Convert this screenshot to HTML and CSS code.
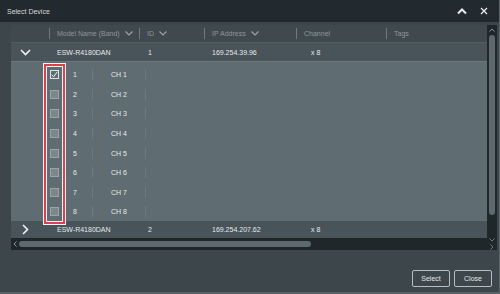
FILE: index.html
```html
<!DOCTYPE html>
<html lang="en">
  <head>
    <meta charset="UTF-8" />
    <title>Select Device</title>
    <link rel="stylesheet" href="styles.css">
  </head>
  <body>
    <div class="window">
      <div class="titlebar">
        <span class="title">Select Device</span>
        <div class="win-icons">
          <svg width="10" height="8" viewBox="0 0 10 8"><path d="M1 6.5 L5 2.5 L9 6.5" stroke="#e8ecee" stroke-width="2" fill="none"/></svg>
          <svg width="8" height="8" viewBox="0 0 8 8"><path d="M1 1 L7 7 M7 1 L1 7" stroke="#e8ecee" stroke-width="1.3" fill="none"/></svg>
        </div>
      </div>

      <div class="body">
        <div class="table">
          <div class="table-main">
            <div class="content">
              <div class="row header">
                <div class="cell c0"></div>
                <div class="cell c1"><span class="sep"></span>Model Name (Band)<svg class="chev" width="8" height="5" viewBox="0 0 8 5"><path d="M0.5 0.5 L4 4 L7.5 0.5" stroke="#9aa4a8" stroke-width="1.2" fill="none"/></svg></div>
                <div class="cell c2"><span class="sep"></span>ID<svg class="chev" width="8" height="5" viewBox="0 0 8 5"><path d="M0.5 0.5 L4 4 L7.5 0.5" stroke="#9aa4a8" stroke-width="1.2" fill="none"/></svg></div>
                <div class="cell c3"><span class="sep"></span>IP Address<svg class="chev" width="8" height="5" viewBox="0 0 8 5"><path d="M0.5 0.5 L4 4 L7.5 0.5" stroke="#9aa4a8" stroke-width="1.2" fill="none"/></svg></div>
                <div class="cell c4"><span class="sep"></span>Channel</div>
                <div class="cell c5"><span class="sep"></span>Tags</div>
              </div>

              <div class="row device">
                <div class="cell c0"><svg class="expander" width="11" height="7" viewBox="0 0 11 7"><path d="M1 1 L5.5 5.5 L10 1" stroke="#f2f4f5" stroke-width="1.6" fill="none"/></svg></div>
                <div class="cell c1">ESW-R4180DAN</div>
                <div class="cell c2">1</div>
                <div class="cell c3">169.254.39.96</div>
                <div class="cell c4 count">x 8</div>
                <div class="cell c5"></div>
              </div>

              <div class="children">
                <div class="highlight"></div>
                <div class="child-row"><span class="cb checked"><svg width="7" height="7" viewBox="0 0 7 7"><path d="M0.8 3.8 L2.6 5.8 L6.3 0.8" stroke="#f2f4f5" stroke-width="1" fill="none"/></svg></span><span class="num">1</span><span class="sep"></span><span class="ch">CH 1</span><span class="sep"></span></div>
                <div class="child-row"><span class="cb"></span><span class="num">2</span><span class="sep"></span><span class="ch">CH 2</span><span class="sep"></span></div>
                <div class="child-row"><span class="cb"></span><span class="num">3</span><span class="sep"></span><span class="ch">CH 3</span><span class="sep"></span></div>
                <div class="child-row"><span class="cb"></span><span class="num">4</span><span class="sep"></span><span class="ch">CH 4</span><span class="sep"></span></div>
                <div class="child-row"><span class="cb"></span><span class="num">5</span><span class="sep"></span><span class="ch">CH 5</span><span class="sep"></span></div>
                <div class="child-row"><span class="cb"></span><span class="num">6</span><span class="sep"></span><span class="ch">CH 6</span><span class="sep"></span></div>
                <div class="child-row"><span class="cb"></span><span class="num">7</span><span class="sep"></span><span class="ch">CH 7</span><span class="sep"></span></div>
                <div class="child-row"><span class="cb"></span><span class="num">8</span><span class="sep"></span><span class="ch">CH 8</span><span class="sep"></span></div>
              </div>

              <div class="row device second">
                <div class="cell c0"><svg class="expander right" width="7" height="11" viewBox="0 0 7 11"><path d="M1 1 L5.5 5.5 L1 10" stroke="#f2f4f5" stroke-width="1.6" fill="none"/></svg></div>
                <div class="cell c1">ESW-R4180DAN</div>
                <div class="cell c2">2</div>
                <div class="cell c3">169.254.207.62</div>
                <div class="cell c4 count">x 8</div>
                <div class="cell c5"></div>
              </div>
            </div>

            <div class="vscroll">
              <svg width="6" height="4" viewBox="0 0 6 4"><path d="M0.5 3.5 L3 1 L5.5 3.5" stroke="#8d979b" stroke-width="1" fill="none"/></svg>
              <div class="vthumb"></div>
            </div>
          </div>

          <div class="hscroll">
            <svg width="4" height="6" viewBox="0 0 4 6"><path d="M3.5 0.5 L1 3 L3.5 5.5" stroke="#8d979b" stroke-width="1" fill="none"/></svg>
            <div class="hthumb"></div>
            <div class="hspace"></div>
            <div class="corner">
              <svg width="6" height="4" viewBox="0 0 6 4"><path d="M0.5 0.5 L3 3 L5.5 0.5" stroke="#6d777b" stroke-width="1" fill="none"/></svg>
              <svg width="4" height="6" viewBox="0 0 4 6"><path d="M0.5 0.5 L3 3 L0.5 5.5" stroke="#6d777b" stroke-width="1" fill="none"/></svg>
            </div>
          </div>
        </div>

        <div class="footer">
          <button class="btn">Select</button>
          <button class="btn">Close</button>
        </div>
      </div>
    </div>
  </body>
</html>
```

FILE: styles.css
```css
html,
body {
  margin: 0;
  padding: 0;
  background: #3d464b;
}

body {
  font-family: "Liberation Sans", Arial, sans-serif;
  font-size: 7px;
  color: #e6e9ea;
}

.window {
  width: 500px;
  height: 294px;
  box-sizing: border-box;
  border-right: 1px solid #5d666a;
  border-bottom: 2px solid #596266;
  background: #3d464b;
  display: flex;
  flex-direction: column;
  overflow: hidden;
}

.titlebar {
  height: 22px;
  flex: none;
  background: #222a2f;
  display: flex;
  align-items: center;
  justify-content: space-between;
  padding: 0 11px 0 7px;
}

.title {
  color: #d4d8da;
  font-size: 7px;
}

.win-icons {
  display: flex;
  align-items: center;
  gap: 13px;
}

.body {
  flex: 1;
  display: flex;
  flex-direction: column;
  padding: 3px 2px 0 11px;
}

.table {
  width: 486px;
  height: 225px;
  background: #2b3439;
  display: flex;
  flex-direction: column;
}

.table-main {
  flex: 1;
  display: flex;
}

.content {
  width: 476px;
  display: flex;
  flex-direction: column;
}

.row {
  display: flex;
  align-items: center;
}

.cell {
  display: flex;
  align-items: center;
  height: 100%;
  box-sizing: border-box;
  white-space: nowrap;
}

.c0 { width: 38px; }
.c1 { width: 90px; }
.c2 { width: 65px; }
.c3 { width: 92px; }
.c4 { width: 90px; }
.c5 { flex: 1; }

.header {
  height: 17px;
  background: #3f494e;
  color: #8d989c;
}

.header .sep {
  margin-right: 7px;
}

.header .chev {
  margin-left: 5px;
}

.sep {
  width: 1px;
  height: 11px;
  background: #6f7a7e;
  flex: none;
}

.device {
  height: 18px;
  background: #48545a;
  border-top: 1px solid #525d62;
}

.device .c0 {
  padding-left: 9px;
}

.device .c1 {
  padding-left: 8px;
}

.device .c2 {
  padding-left: 9px;
}

.device .c3 {
  padding-left: 8px;
}

.device .count {
  padding-left: 15px;
}

.device.second {
  height: 17px;
  border-top: none;
}

.device.second .c0 {
  padding-left: 11px;
}

.children {
  position: relative;
  height: 160px;
  box-sizing: border-box;
  padding-top: 3px;
  background: #5f6c71;
  border-top: 1px solid #6a777c;
}

.highlight {
  position: absolute;
  left: 33px;
  top: 2px;
  width: 21px;
  height: 160px;
  box-sizing: border-box;
  border: 2px solid #d8414f;
  box-shadow: 0 0 0 1px #f4f4f4, inset 0 0 0 1px #f4f4f4;
  z-index: 2;
}

.child-row {
  height: 19.6px;
  display: flex;
  align-items: center;
  padding-left: 39px;
}

.cb {
  width: 9px;
  height: 9px;
  box-sizing: border-box;
  background: #7c878b;
  border: 1px solid #9aa3a6;
  flex: none;
  display: flex;
  align-items: center;
  justify-content: center;
}

.cb.checked {
  background: #5f6c71;
  border-color: #dfe3e4;
}

.num {
  width: 19px;
  padding-left: 14px;
  color: #e6e9ea;
}

.ch {
  width: 52px;
  text-align: center;
}

.vscroll {
  width: 10px;
  background: #1f272b;
  display: flex;
  flex-direction: column;
  align-items: center;
  padding-top: 3px;
  box-sizing: border-box;
}

.vthumb {
  width: 6px;
  height: 180px;
  margin-top: 3px;
  border-radius: 3px;
  background: #5e696e;
}

.hscroll {
  height: 12px;
  background: #1f272b;
  display: flex;
  align-items: center;
  padding-left: 2px;
}

.hthumb {
  width: 292px;
  height: 6px;
  margin-left: 2px;
  border-radius: 3px;
  background: #5e696e;
}

.hspace {
  flex: 1;
}

.corner {
  width: 10px;
  height: 12px;
  display: flex;
  flex-direction: column;
  align-items: center;
  justify-content: space-between;
}

.footer {
  display: flex;
  justify-content: flex-end;
  gap: 4px;
  padding: 20px 5px 0 0;
}

.btn {
  width: 38px;
  height: 17px;
  padding: 0;
  font-family: "Liberation Sans", Arial, sans-serif;
  font-size: 7px;
  color: #e6e9ea;
  background: #3d464b;
  border: 1px solid #b7bec1;
  border-radius: 2px;
}
```
